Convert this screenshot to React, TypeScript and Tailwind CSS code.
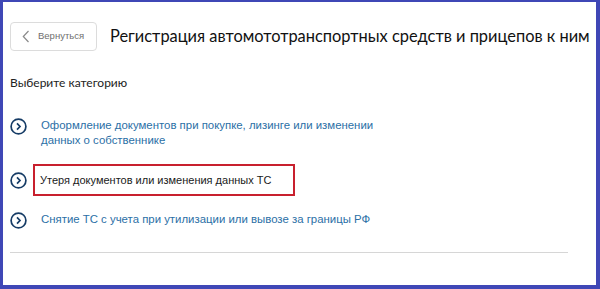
export default function App() {
  const items = [
    { text: ["Оформление документов при покупке, лизинге или изменении", "данных о собственнике"], active: false },
    { text: ["Утеря документов или изменения данных ТС"], active: true },
    { text: ["Снятие ТС с учета при утилизации или вывозе за границы РФ"], active: false },
  ];

  return (
    <div className="w-[600px] h-[289px] bg-[#3f47b6] pl-[3px] pt-[2px] pr-[4px] pb-[4px]">
      <div className="h-full bg-white pl-[7px] pr-[28px] font-['Liberation_Sans',Arial,sans-serif]">
        {/* header */}
        <div className="flex items-center pt-[20px]">
          <button className="shrink-0 flex items-center w-[87px] h-[29px] border border-[#dcdcdc] rounded-[4px] pl-[11px] text-[9.5px] text-[#6f6f6f]">
            <svg width="8" height="13" viewBox="0 0 8 13" className="mr-[8px]">
              <path d="M6.5 1 L1.3 6.5 L6.5 12" fill="none" stroke="#8a8a8a" strokeWidth="1.2" />
            </svg>
            Вернуться
          </button>
          <h1 className="ml-[13px] whitespace-nowrap text-[16.4px] text-[#111] font-['Lato',sans-serif] leading-none">
            Регистрация автомототранспортных средств и прицепов к ним
          </h1>
        </div>

        <p className="mt-[25px] text-[12px] leading-[14px] text-[#222] font-['Lato',sans-serif]">Выберите категорию</p>

        <ul className="mt-[28px] flex flex-col">
          {items.map((it, i) => (
            <li key={i} className={i === 0 ? "flex items-start" : i === 1 ? "flex items-center mt-[16px]" : "flex items-start mt-[16px]"}>
              <svg width="17" height="17" viewBox="0 0 17 17" className="shrink-0">
                <circle cx="8.5" cy="8.5" r="7.4" fill="none" stroke="#163c66" strokeWidth="1.7" />
                <path d="M7 5.3 L10 8.5 L7 11.7" fill="none" stroke="#163c66" strokeWidth="1.7" />
              </svg>
              <div
                className={
                  it.active
                    ? "ml-[6px] w-[262px] h-[32px] flex items-center border-2 border-[#c8202e] pl-[5px] text-[11px] leading-[15px] text-[#1a1a1a]"
                    : "ml-[14px] text-[11.4px] leading-[15px] text-[#2b6fa6]"
                }
              >
                <div>
                  {it.text.map((t, j) => (
                    <div key={j}>{t}</div>
                  ))}
                </div>
              </div>
            </li>
          ))}
        </ul>

        <div className="mt-[23px] h-px bg-[#d6d6d6]" />
      </div>
    </div>
  );
}
